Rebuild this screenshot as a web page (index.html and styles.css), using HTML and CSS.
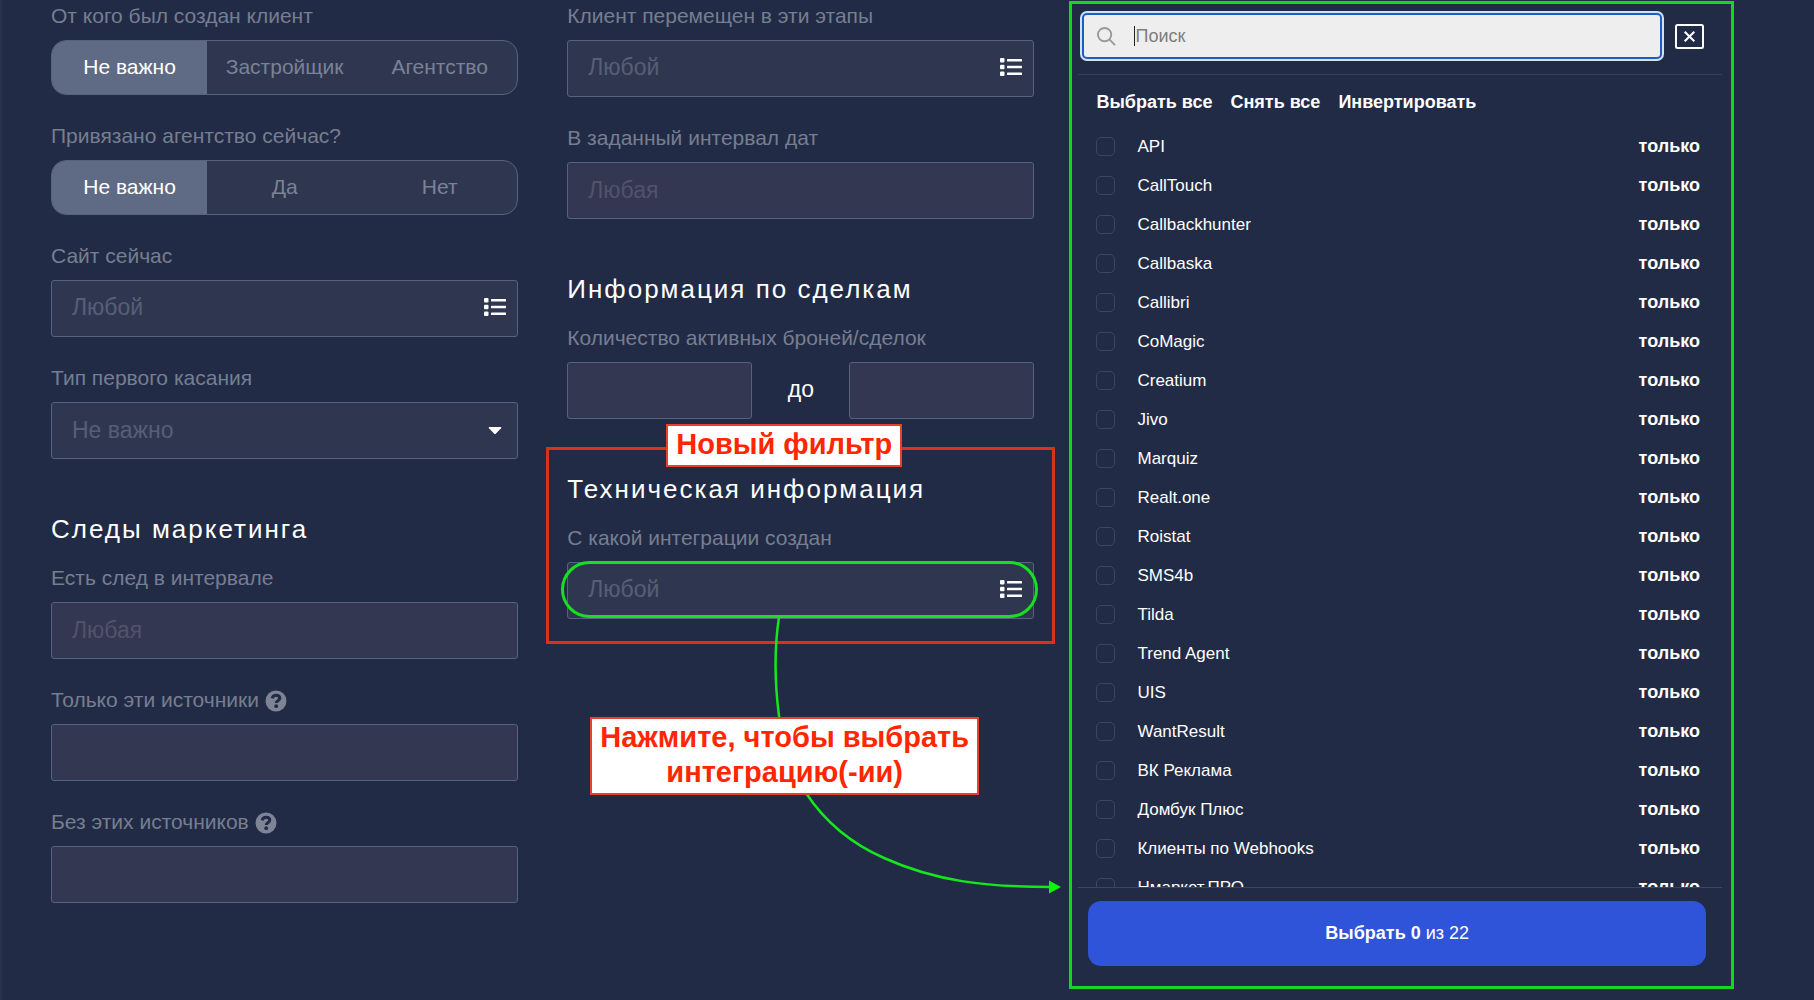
FILE: index.html
```html
<!DOCTYPE html>
<html lang="ru">
<head>
  <meta charset="UTF-8">
  <title>Фильтры клиентов</title>
  <link rel="stylesheet" href="styles.css">
</head>
<body>
  <svg class="sprite" aria-hidden="true">
    <symbol id="icon-list" viewBox="0 0 22 18">
      <rect x="0" y="0" width="4.500" height="4.500" rx="1"/>
      <rect x="0" y="6.800" width="4.500" height="4.500" rx="1"/>
      <rect x="0" y="13.500" width="4.500" height="4.500" rx="1"/>
      <rect x="7" y="1" width="15" height="2.600" rx=".6"/>
      <rect x="7" y="7.700" width="15" height="2.600" rx=".6"/>
      <rect x="7" y="14.400" width="15" height="2.600" rx=".6"/>
    </symbol>
    <symbol id="icon-help" viewBox="0 0 22 22">
      <circle cx="11" cy="11" r="10.500" fill="#7d8495"/>
      <path d="M7.200 8.300c.5-1.900 1.900-3 3.900-3 2.100 0 3.700 1.200 3.700 3 0 2.600-3.500 2.400-3.500 4.700" fill="none" stroke="#222b45" stroke-width="3"/>
      <circle cx="11.200" cy="16.200" r="1.900" fill="#222b45"/>
    </symbol>
  </svg>

  <div class="page">
    <form class="filters">
      <div class="column">
        <fieldset class="field">
          <legend class="label">От кого был создан клиент</legend>
          <div class="segments">
            <label><input type="radio" name="creator" checked><span>Не важно</span></label>
            <label><input type="radio" name="creator"><span>Застройщик</span></label>
            <label><input type="radio" name="creator"><span>Агентство</span></label>
          </div>
        </fieldset>
        <fieldset class="field">
          <legend class="label">Привязано агентство сейчас?</legend>
          <div class="segments">
            <label><input type="radio" name="agency" checked><span>Не важно</span></label>
            <label><input type="radio" name="agency"><span>Да</span></label>
            <label><input type="radio" name="agency"><span>Нет</span></label>
          </div>
        </fieldset>
        <div class="field">
          <label class="label" for="site">Сайт сейчас</label>
          <div class="control">
            <input class="input input-list" type="text" id="site" placeholder="Любой" readonly>
            <svg class="control-icon"><use href="#icon-list"/></svg>
          </div>
        </div>
        <div class="field">
          <label class="label" for="touch">Тип первого касания</label>
          <div class="control">
            <select class="input input-list" id="touch">
              <option>Не важно</option>
            </select>
            <svg class="control-icon" viewBox="0 0 22 18"><path d="M5.500 7h11q1.500 0 .5 1.300l-5 5.200q-1 1-2 0l-5-5.200q-1-1.300.5-1.300z"/></svg>
          </div>
        </div>
        <section class="section">
          <h2>Следы маркетинга</h2>
          <div class="field">
            <label class="label" for="trace">Есть след в интервале</label>
            <input class="input" type="text" id="trace" placeholder="Любая">
          </div>
          <div class="field">
            <label class="label" for="only">Только эти источники <svg class="help"><use href="#icon-help"/></svg></label>
            <input class="input" type="text" id="only">
          </div>
          <div class="field">
            <label class="label" for="without">Без этих источников <svg class="help"><use href="#icon-help"/></svg></label>
            <input class="input" type="text" id="without">
          </div>
        </section>
      </div>

      <div class="column">
        <div class="field">
          <label class="label" for="stages">Клиент перемещен в эти этапы</label>
          <div class="control">
            <input class="input input-list" type="text" id="stages" placeholder="Любой" readonly>
            <svg class="control-icon"><use href="#icon-list"/></svg>
          </div>
        </div>
        <div class="field">
          <label class="label" for="dates">В заданный интервал дат</label>
          <input class="input" type="text" id="dates" placeholder="Любая">
        </div>
        <section class="section">
          <h2>Информация по сделкам</h2>
          <div class="field">
            <label class="label" for="deals-from">Количество активных броней/сделок</label>
            <div class="range">
              <input class="input" type="text" id="deals-from">
              <label for="deals-to">до</label>
              <input class="input" type="text" id="deals-to">
            </div>
          </div>
        </section>
        <section class="section">
          <h2>Техническая информация</h2>
          <div class="field">
            <label class="label" for="integration">С какой интеграции создан</label>
            <div class="control">
              <input class="input input-list" type="text" id="integration" placeholder="Любой" readonly>
              <svg class="control-icon"><use href="#icon-list"/></svg>
              <div class="pill"></div>
            </div>
          </div>
          <div class="frame"></div>
          <!-- arrow from the field to the list of integrations -->
          <svg class="arrow" viewBox="0 0 500 280">
            <path d="M212 0C207 33 208 68 212 99S225 155 239 176C258 205 283 226 317 241C368 264 418 270 484 270" fill="none" stroke="#14e81c" stroke-width="2.500"/>
            <path d="M482 263.500v13l12-6.500z" fill="#0cf50c"/>
          </svg>
          <div class="note note-title">Новый фильтр</div>
          <div class="note note-hint">Нажмите, чтобы выбрать<br>интеграцию(-ии)</div>
        </section>
      </div>
    </form>

    <aside class="panel">
      <div class="search">
        <div class="search-box">
          <svg class="search-icon" viewBox="0 0 20 20"><circle cx="8" cy="8" r="7"/><path d="M13 13l6 6"/></svg>
          <span class="caret"></span>
          <input type="text" placeholder="Поиск" aria-label="Поиск">
        </div>
        <button class="close" type="button" aria-label="Закрыть">
          <svg viewBox="0 0 29 25"><rect x="1" y="1" width="27" height="23" rx="1.500"/><path d="M9.700 7.700l9.600 9.600M19.300 7.700l-9.600 9.600"/></svg>
        </button>
      </div>
      <div class="actions">
        <button type="button">Выбрать все</button>
        <button type="button">Снять все</button>
        <button type="button">Инвертировать</button>
      </div>
      <ul class="list">
        <li><label><input type="checkbox">API</label><button type="button">только</button></li>
        <li><label><input type="checkbox">CallTouch</label><button type="button">только</button></li>
        <li><label><input type="checkbox">Callbackhunter</label><button type="button">только</button></li>
        <li><label><input type="checkbox">Callbaska</label><button type="button">только</button></li>
        <li><label><input type="checkbox">Callibri</label><button type="button">только</button></li>
        <li><label><input type="checkbox">CoMagic</label><button type="button">только</button></li>
        <li><label><input type="checkbox">Creatium</label><button type="button">только</button></li>
        <li><label><input type="checkbox">Jivo</label><button type="button">только</button></li>
        <li><label><input type="checkbox">Marquiz</label><button type="button">только</button></li>
        <li><label><input type="checkbox">Realt.one</label><button type="button">только</button></li>
        <li><label><input type="checkbox">Roistat</label><button type="button">только</button></li>
        <li><label><input type="checkbox">SMS4b</label><button type="button">только</button></li>
        <li><label><input type="checkbox">Tilda</label><button type="button">только</button></li>
        <li><label><input type="checkbox">Trend Agent</label><button type="button">только</button></li>
        <li><label><input type="checkbox">UIS</label><button type="button">только</button></li>
        <li><label><input type="checkbox">WantResult</label><button type="button">только</button></li>
        <li><label><input type="checkbox">ВК Реклама</label><button type="button">только</button></li>
        <li><label><input type="checkbox">Домбук Плюс</label><button type="button">только</button></li>
        <li><label><input type="checkbox">Клиенты по Webhooks</label><button type="button">только</button></li>
        <li><label><input type="checkbox">Нмаркет.ПРО</label><button type="button">только</button></li>
      </ul>
      <div class="footer">
        <button class="submit" type="button"><b>Выбрать 0</b> из 22</button>
      </div>
    </aside>
  </div>
</body>
</html>
```
FILE: styles.css
```css
* {
  box-sizing: border-box;
}
body {
  margin: 0;
  background-color: #222b45;
  color: #fff;
  font-family: "Liberation Sans", Arial, sans-serif;
  font-size: 21px;
  overflow: hidden;
}
button, input, select {
  font-family: inherit;
}
button {
  padding: 0;
  border: none;
  background: none;
  color: #fff;
  cursor: pointer;
}
.sprite {
  display: none;
}
.page {
  display: grid;
  grid-template-columns: 37fr 25fr;
  gap: 35px;
  height: 100vh;
  padding: 0 80px 0 49px;
  border-left: 2px solid #28324d;
}

/* filters */
.filters {
  display: grid;
  grid-template-columns: 1fr 1fr;
  gap: 49px;
  align-items: start;
  padding-top: 4px;
}
.column, .section {
  display: flex;
  flex-direction: column;
  gap: 29px;
}
.field {
  min-width: 0;
  margin: 0;
  padding: 0;
  border: none;
}
.label {
  display: block;
  margin-bottom: 12px;
  padding: 0;
  line-height: 24px;
  color: #767e91;
}
.help {
  width: 22px;
  height: 22px;
  vertical-align: -3px;
  margin: -2px 0;
}
.section {
  position: relative;
  margin-top: 26px;
}
.section h2 {
  margin: 0 0 -7px;
  font-size: 26px;
  font-weight: normal;
  line-height: 30px;
  letter-spacing: 2px;
}
.input {
  display: block;
  width: 100%;
  height: 57px;
  padding: 0 20px;
  border: 1px solid #56627f;
  border-radius: 3px;
  background-color: #343751;
  color: #565f77;
  font-size: 23px;
  outline: none;
}
.input::placeholder {
  color: #50536b;
}
.input-list {
  padding-bottom: 2px;
  background-color: #2f3750;
  appearance: none;
}
.input-list::placeholder {
  color: #565f77;
}
.control {
  position: relative;
}
.control-icon {
  position: absolute;
  right: 12px;
  top: 18px;
  width: 22px;
  height: 18px;
  fill: #fff;
}
.segments {
  display: grid;
  grid-template-columns: repeat(3, 1fr);
  height: 55px;
  border: 1px solid #56627f;
  border-radius: 15px;
  background-color: #2f3750;
  overflow: hidden;
}
.segments label {
  position: relative;
  display: flex;
}
.segments input {
  position: absolute;
  opacity: 0;
}
.segments span {
  flex: 1;
  line-height: 51px;
  text-align: center;
  color: #7a8297;
}
.segments input:checked + span {
  background-color: #5f6b85;
  color: #fff;
}
.range {
  display: grid;
  grid-template-columns: 1fr 97px 1fr;
  text-align: center;
}
.range label {
  font-size: 23px;
  line-height: 54px;
}

/* callouts */
.frame {
  position: absolute;
  inset: -27px -21px -25px;
  border: 3px solid #d9321b;
  pointer-events: none;
}
.pill {
  position: absolute;
  inset: -1px -4px 1px -6px;
  border: 3px solid #18df20;
  border-radius: 29px;
  pointer-events: none;
}
.arrow {
  position: absolute;
  left: 0;
  top: calc(100% - 2px);
  width: 500px;
  height: 280px;
}
.note {
  position: absolute;
  padding: 1px 8px 3px;
  border: 2px solid #e8402a;
  background-color: #fff;
  color: #ff2600;
  font-size: 29px;
  font-weight: bold;
  line-height: 35px;
  text-align: center;
  white-space: nowrap;
}
.note-title {
  left: 99px;
  top: -50px;
}
.note-hint {
  left: 23px;
  top: calc(100% + 98px);
}

/* integrations list */
.panel {
  display: flex;
  flex-direction: column;
  min-height: 0;
  margin: 1px 0 11px;
  padding: 7px 9px 0 6px;
  border: 3px solid #14d81d;
}
.search {
  display: flex;
  align-items: center;
  gap: 11px;
  padding: 4px 18px 17px 6px;
  border-bottom: 1px solid #36405a;
}
.search-box {
  display: flex;
  align-items: center;
  flex: 1;
  height: 42px;
  margin: 0 4px 0 0;
  border-radius: 3px;
  padding-left: 13px;
  background-color: #eee;
  box-shadow: 0 0 0 2px #1d5fc0, 0 0 0 4px #cfe2f7;
}
.search-icon {
  width: 19px;
  height: 19px;
  fill: none;
  stroke: #999;
  stroke-width: 2;
}
.caret {
  width: 1px;
  height: 20px;
  margin-left: 18px;
  background-color: #222;
}
.search-box input {
  flex: 1;
  min-width: 0;
  border: none;
  padding: 0;
  background: none;
  font-size: 18px;
  outline: none;
}
.search-box input::placeholder {
  color: #7d7d7d;
}
.close svg {
  display: block;
  width: 29px;
  height: 25px;
  fill: none;
  stroke: #fff;
  stroke-width: 2;
}
.actions {
  display: flex;
  gap: 18px;
  padding: 16px 18px 10px;
}
.actions button {
  font-size: 18px;
  font-weight: bold;
  line-height: 22px;
}
.list {
  flex: 1;
  min-height: 0;
  margin: 0;
  padding: 4px 22px 0 18px;
  list-style: none;
  overflow: hidden;
}
.list li {
  display: flex;
  justify-content: space-between;
  align-items: center;
  height: 39px;
  font-size: 17px;
}
.list label {
  display: flex;
  align-items: center;
  gap: 22px;
}
.list input {
  appearance: none;
  width: 19px;
  height: 19px;
  margin: 0;
  border: 1px solid #3c465e;
  border-radius: 5px;
}
.list button {
  font-size: 18px;
  font-weight: bold;
}
.footer {
  padding: 13px 16px 20px 10px;
  border-top: 1px solid #3b455e;
}
.submit {
  display: block;
  width: 100%;
  height: 65px;
  border-radius: 13px;
  background-color: #2f54d9;
  font-size: 18px;
}
```
